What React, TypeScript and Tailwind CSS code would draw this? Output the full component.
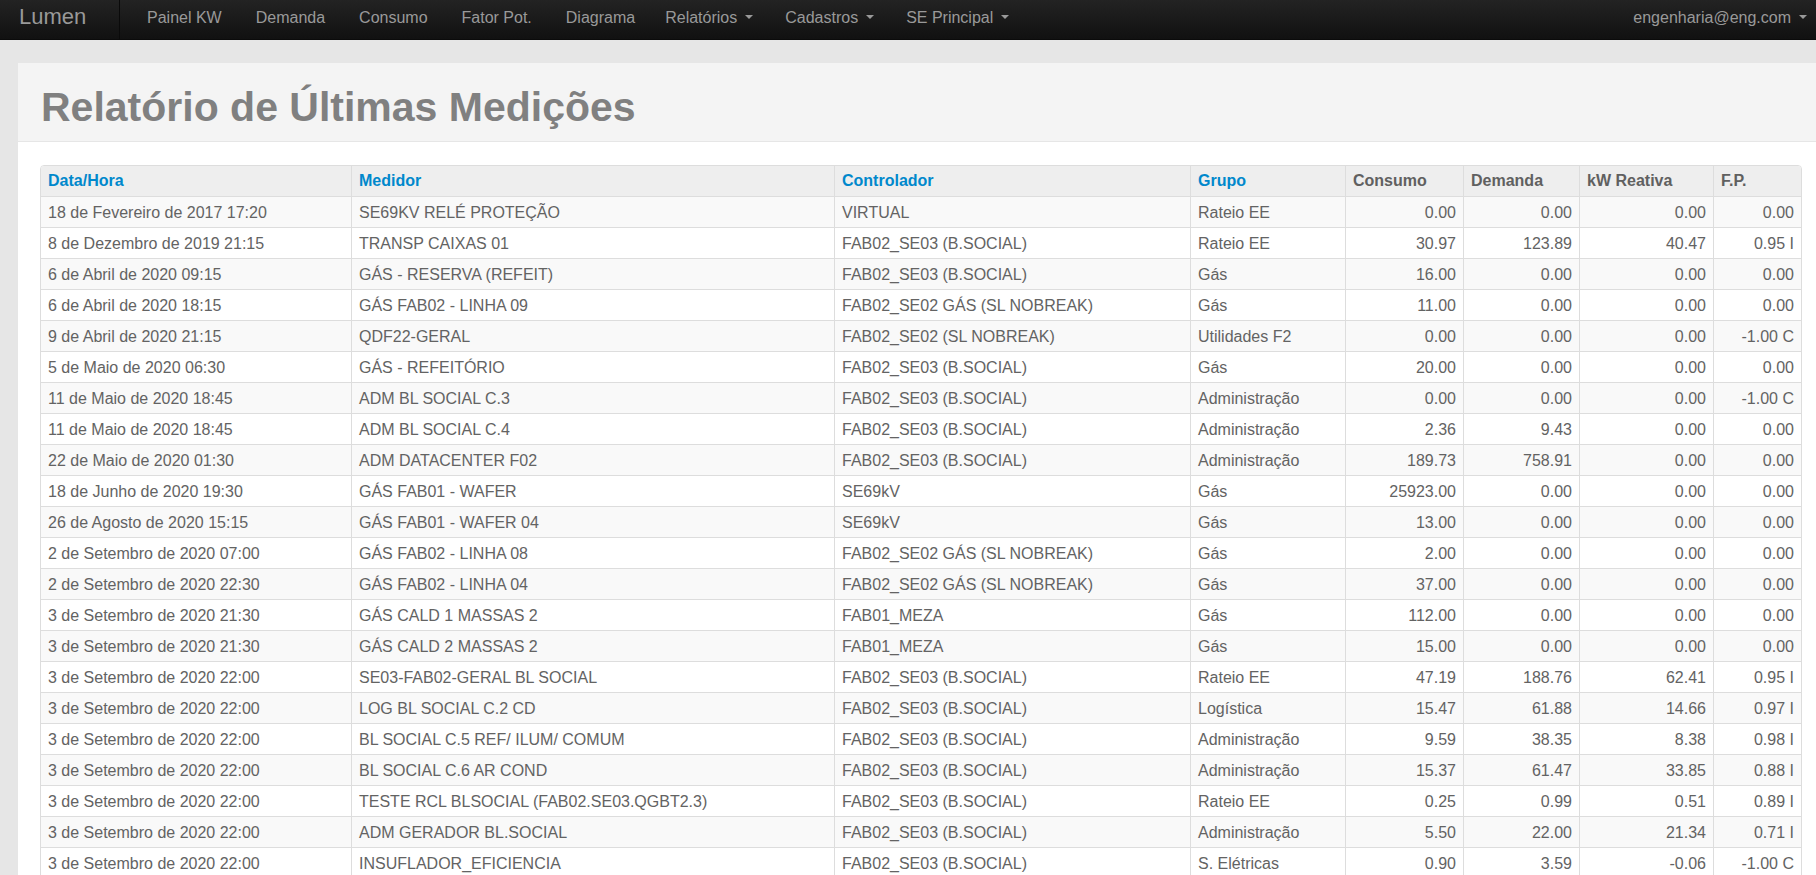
import * as React from "react";

type Row = [string, string, string, string, string, string, string, string];

const rows: Row[] = [
  ["18 de Fevereiro de 2017 17:20", "SE69KV RELÉ PROTEÇÃO", "VIRTUAL", "Rateio EE", "0.00", "0.00", "0.00", "0.00"],
  ["8 de Dezembro de 2019 21:15", "TRANSP CAIXAS 01", "FAB02_SE03 (B.SOCIAL)", "Rateio EE", "30.97", "123.89", "40.47", "0.95 I"],
  ["6 de Abril de 2020 09:15", "GÁS - RESERVA (REFEIT)", "FAB02_SE03 (B.SOCIAL)", "Gás", "16.00", "0.00", "0.00", "0.00"],
  ["6 de Abril de 2020 18:15", "GÁS FAB02 - LINHA 09", "FAB02_SE02 GÁS (SL NOBREAK)", "Gás", "11.00", "0.00", "0.00", "0.00"],
  ["9 de Abril de 2020 21:15", "QDF22-GERAL", "FAB02_SE02 (SL NOBREAK)", "Utilidades F2", "0.00", "0.00", "0.00", "-1.00 C"],
  ["5 de Maio de 2020 06:30", "GÁS - REFEITÓRIO", "FAB02_SE03 (B.SOCIAL)", "Gás", "20.00", "0.00", "0.00", "0.00"],
  ["11 de Maio de 2020 18:45", "ADM BL SOCIAL C.3", "FAB02_SE03 (B.SOCIAL)", "Administração", "0.00", "0.00", "0.00", "-1.00 C"],
  ["11 de Maio de 2020 18:45", "ADM BL SOCIAL C.4", "FAB02_SE03 (B.SOCIAL)", "Administração", "2.36", "9.43", "0.00", "0.00"],
  ["22 de Maio de 2020 01:30", "ADM DATACENTER F02", "FAB02_SE03 (B.SOCIAL)", "Administração", "189.73", "758.91", "0.00", "0.00"],
  ["18 de Junho de 2020 19:30", "GÁS FAB01 - WAFER", "SE69kV", "Gás", "25923.00", "0.00", "0.00", "0.00"],
  ["26 de Agosto de 2020 15:15", "GÁS FAB01 - WAFER 04", "SE69kV", "Gás", "13.00", "0.00", "0.00", "0.00"],
  ["2 de Setembro de 2020 07:00", "GÁS FAB02 - LINHA 08", "FAB02_SE02 GÁS (SL NOBREAK)", "Gás", "2.00", "0.00", "0.00", "0.00"],
  ["2 de Setembro de 2020 22:30", "GÁS FAB02 - LINHA 04", "FAB02_SE02 GÁS (SL NOBREAK)", "Gás", "37.00", "0.00", "0.00", "0.00"],
  ["3 de Setembro de 2020 21:30", "GÁS CALD 1 MASSAS 2", "FAB01_MEZA", "Gás", "112.00", "0.00", "0.00", "0.00"],
  ["3 de Setembro de 2020 21:30", "GÁS CALD 2 MASSAS 2", "FAB01_MEZA", "Gás", "15.00", "0.00", "0.00", "0.00"],
  ["3 de Setembro de 2020 22:00", "SE03-FAB02-GERAL BL SOCIAL", "FAB02_SE03 (B.SOCIAL)", "Rateio EE", "47.19", "188.76", "62.41", "0.95 I"],
  ["3 de Setembro de 2020 22:00", "LOG BL SOCIAL C.2 CD", "FAB02_SE03 (B.SOCIAL)", "Logística", "15.47", "61.88", "14.66", "0.97 I"],
  ["3 de Setembro de 2020 22:00", "BL SOCIAL C.5 REF/ ILUM/ COMUM", "FAB02_SE03 (B.SOCIAL)", "Administração", "9.59", "38.35", "8.38", "0.98 I"],
  ["3 de Setembro de 2020 22:00", "BL SOCIAL C.6 AR COND", "FAB02_SE03 (B.SOCIAL)", "Administração", "15.37", "61.47", "33.85", "0.88 I"],
  ["3 de Setembro de 2020 22:00", "TESTE RCL BLSOCIAL (FAB02.SE03.QGBT2.3)", "FAB02_SE03 (B.SOCIAL)", "Rateio EE", "0.25", "0.99", "0.51", "0.89 I"],
  ["3 de Setembro de 2020 22:00", "ADM GERADOR BL.SOCIAL", "FAB02_SE03 (B.SOCIAL)", "Administração", "5.50", "22.00", "21.34", "0.71 I"],
  ["3 de Setembro de 2020 22:00", "INSUFLADOR_EFICIENCIA", "FAB02_SE03 (B.SOCIAL)", "S. Elétricas", "0.90", "3.59", "-0.06", "-1.00 C"],
];

const columns = [
  { label: "Data/Hora", width: "w-[310px]", link: true },
  { label: "Medidor", width: "w-[483px]", link: true },
  { label: "Controlador", width: "w-[356px]", link: true },
  { label: "Grupo", width: "w-[155px]", link: true },
  { label: "Consumo", width: "w-[118px]", link: false },
  { label: "Demanda", width: "w-[116px]", link: false },
  { label: "kW Reativa", width: "w-[134px]", link: false },
  { label: "F.P.", width: "w-[88px]", link: false },
];

const navLinks = ["Painel KW", "Demanda", "Consumo", "Fator Pot.", "Diagrama"];
const navMenus = ["Relatórios", "Cadastros", "SE Principal"];

function Caret() {
  return (
    <span className="ml-[8px] inline-block h-0 w-0 translate-y-[-2px] border-x-[4px] border-t-[4px] border-x-transparent border-t-[#999999] align-middle" />
  );
}

function Navbar() {
  return (
    <div className="flex h-10 items-start border-b border-[#0b0b0b] bg-linear-to-b from-[#232323] to-[#111111] text-[16px] leading-[20px] text-[#999999]">
      <div className="h-full w-[120px] border-r border-[#0a0a0a] pl-[19px] pt-[4px] text-[22px] leading-[26px] text-[#999999]">
        Lumen
      </div>
      <div className="ml-[10px] flex">
        {navLinks.map((l, i) => (
          <a key={l} className={`${i === 4 ? "pl-[17px] pr-[14px]" : "px-[17px]"} pt-[8px]`}>
            {l}
          </a>
        ))}
        {navMenus.map((l) => (
          <a key={l} className="px-[16px] pt-[8px]">
            {l}
            <Caret />
          </a>
        ))}
      </div>
      <a className="ml-auto pr-[9px] pt-[8px]">
        engenharia@eng.com
        <Caret />
      </a>
    </div>
  );
}

function ReportTable() {
  return (
    <div className="w-[1762px] overflow-hidden rounded-[4px] border border-[#dddddd]">
      <table className="w-[1760px] table-fixed border-separate border-spacing-0 text-[16px] leading-[20px]">
        <thead>
          <tr className="bg-[#eeeeee]">
            {columns.map((c, i) => (
              <th
                key={c.label}
                className={`${c.width} ${i === 0 ? "" : "border-l border-[#dddddd]"} px-[7px] pt-[5px] pb-[5px] text-left font-bold ${
                  c.link ? "text-[#0088cc]" : "text-[#606060]"
                }`}
              >
                {c.label}
              </th>
            ))}
          </tr>
        </thead>
        <tbody>
          {rows.map((r, ri) => (
            <tr key={ri} className={ri % 2 === 0 ? "bg-[#f9f9f9]" : "bg-white"}>
              {r.map((cell, ci) => (
                <td
                  key={ci}
                  className={`border-t border-[#dddddd] ${ci === 0 ? "" : "border-l"} pt-[6px] pb-[4px] ${
                    ci >= 4 ? "pr-[7px] text-right" : "pl-[7px] text-left"
                  } whitespace-nowrap text-[#636363]`}
                >
                  {cell}
                </td>
              ))}
            </tr>
          ))}
        </tbody>
      </table>
    </div>
  );
}

export default function App() {
  return (
    <div className="min-h-screen overflow-hidden bg-[#e6e6e6] font-['Liberation_Sans',Arial,sans-serif]">
      <Navbar />
      <div className="ml-[18px] mt-[23px] bg-white">
        <div className="h-[79px] border-b border-[#e6e6e6] bg-[#f4f4f4] pl-[23px] pt-[24px]">
          <h1 className="text-[41px] font-bold leading-[41px] text-[#808080]">Relatório de Últimas Medições</h1>
        </div>
        <div className="pl-[22px] pt-[23px] pb-[20px]">
          <ReportTable />
        </div>
      </div>
    </div>
  );
}
